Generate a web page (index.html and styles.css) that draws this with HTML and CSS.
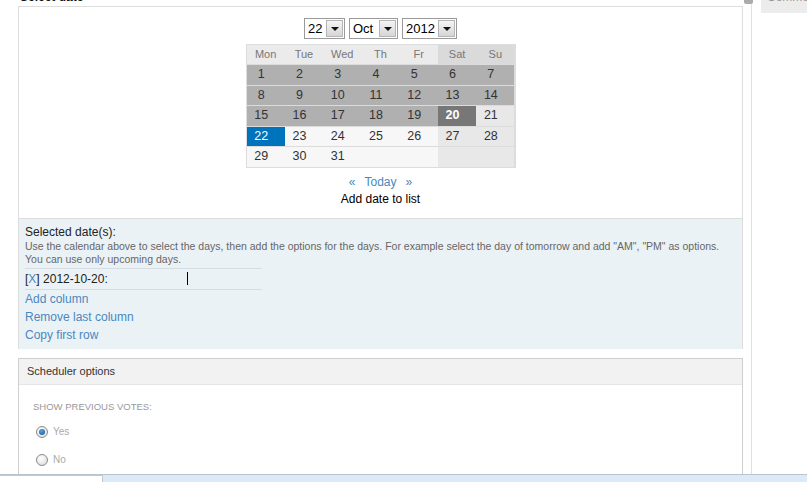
FILE: index.html
```html
<!DOCTYPE html>
<html lang="en">

<head>
    <meta charset="UTF-8">
    <title>Select date</title>
    <link rel="stylesheet" href="styles.css">
</head>

<body>
    <div class="page">
        <div class="main">
            <h3 class="title">Select date</h3>

            <!-- Kalender -->
            <div class="panel">
                <div class="pickers">
                    <div class="pick w-day"><span>22</span><i class="arrow"></i></div>
                    <div class="pick w-month"><span>Oct</span><i class="arrow"></i></div>
                    <div class="pick w-year"><span>2012</span><i class="arrow"></i></div>
                </div>

                <div class="cal">
                    <div class="hd">Mon</div><div class="hd">Tue</div><div class="hd">Wed</div><div class="hd">Th</div><div class="hd">Fr</div><div class="hd we">Sat</div><div class="hd we">Su</div>

                    <div class="d past">1</div><div class="d past">2</div><div class="d past">3</div><div class="d past">4</div><div class="d past">5</div><div class="d past">6</div><div class="d past">7</div>
                    <div class="d past">8</div><div class="d past">9</div><div class="d past">10</div><div class="d past">11</div><div class="d past">12</div><div class="d past">13</div><div class="d past">14</div>
                    <div class="d past">15</div><div class="d past">16</div><div class="d past">17</div><div class="d past">18</div><div class="d past">19</div><div class="d today">20</div><div class="d we">21</div>
                    <div class="d sel">22</div><div class="d">23</div><div class="d">24</div><div class="d">25</div><div class="d">26</div><div class="d we">27</div><div class="d we">28</div>
                    <div class="d">29</div><div class="d">30</div><div class="d">31</div><div class="d"></div><div class="d"></div><div class="d we"></div><div class="d we"></div>
                </div>

                <div class="cal-nav"><a href="#">&laquo;</a><a href="#">Today</a><a href="#">&raquo;</a></div>
                <div class="add-date">Add date to list</div>
            </div>

            <!-- Ausgewaehlte Tage -->
            <div class="selected">
                <div class="sel-title">Selected date(s):</div>
                <p class="help">Use the calendar above to select the days, then add the options for the days. For example select the day of tomorrow and add "AM", "PM" as options.<br>You can use only upcoming days.</p>
                <div class="date-row">[<a href="#">X</a>] 2012-10-20:<span class="caret"></span></div>
                <a class="act" href="#">Add column</a>
                <a class="act" href="#">Remove last column</a>
                <a class="act" href="#">Copy first row</a>
            </div>

            <!-- Optionen -->
            <div class="box">
                <div class="box-head">Scheduler options</div>
                <div class="box-body">
                    <div class="opt-label">Show previous votes:</div>
                    <label class="radio"><span class="dot checked"></span>Yes</label>
                    <label class="radio"><span class="dot"></span>No</label>
                </div>
            </div>
        </div>

        <div class="side">
            <div class="side-rail">
                <div class="plus"></div>
                <div class="rail-line"></div>
            </div>
            <div class="side-tab"><span>Comments</span></div>
        </div>
    </div>

    <div class="taskbar">
        <div class="task-tab"></div>
    </div>
</body>

</html>
```

FILE: styles.css
```css
* {
    margin: 0;
    padding: 0;
    box-sizing: border-box;
}

body {
    font-family: 'Liberation Sans', Arial, sans-serif;
    font-size: 12px;
    color: #222;
    background: #fff;
    height: 482px;
    overflow: hidden;
}

a {
    color: #4a88bd;
    text-decoration: none;
}

.page {
    display: flex;
    height: 482px;
}

.main {
    width: 743px;
    flex-shrink: 0;
    padding-left: 18px;
    margin-top: -10px;
}

.title {
    font-size: 12px;
    line-height: 14px;
    margin-bottom: 2px;
    margin-left: 2px;
    color: #111;
}

/* Kalender-Panel */
.panel {
    border: 1px solid #ddd;
    padding: 10px 0 11px;
    display: flex;
    flex-direction: column;
    align-items: center;
}

.pickers {
    display: flex;
    gap: 4px;
    margin-top: 1px;
    margin-bottom: 5px;
}

.pick {
    height: 21px;
    border: 1px solid #9a9a9a;
    display: flex;
    align-items: center;
    justify-content: space-between;
    padding: 1px 1px 1px 3px;
    font-size: 13px;
    color: #000;
    background: #fff;
}

.w-day { width: 41px; }
.w-month { width: 49px; }
.w-year { width: 55px; }

.arrow {
    width: 17px;
    height: 17px;
    border: 1px solid #b5b5b5;
    background: linear-gradient(#f4f4f4, #d6d6d6);
    position: relative;
}

.arrow::after {
    content: '';
    position: absolute;
    left: 4px;
    top: 6px;
    border-left: 4px solid transparent;
    border-right: 4px solid transparent;
    border-top: 4px solid #111;
}

.cal {
    width: 270px;
    border: 1px solid #ddd;
    display: grid;
    grid-template-columns: repeat(7, 1fr);
    grid-template-rows: 19px;
    grid-auto-rows: 19.5px;
    row-gap: 1px;
    background: #dcdcdc;
}

.cal .hd {
    background: #ebebeb;
    color: #777;
    font-size: 11px;
    line-height: 19px;
    text-align: center;
}

.cal .hd.we {
    background: #dadada;
}

.cal .d {
    background: #f7f7f7;
    color: #333;
    font-size: 12.5px;
    line-height: 19.5px;
    text-align: center;
    padding-right: 9px;
}

.cal .d.we {
    background: #e8e8e8;
}

.cal .d.past {
    background: #b0b0b0;
}

.cal .d.today {
    background: #777;
    color: #fff;
    font-weight: bold;
}

.cal .d.sel {
    background: #0073bd;
    color: #fff;
}

.cal-nav {
    display: flex;
    gap: 9px;
    margin-top: 5px;
    line-height: 18px;
}

.add-date {
    line-height: 16px;
    color: #000;
}

/* Ausgewaehlte Tage */
.selected {
    background: #ebf2f6;
    border-left: 1px solid #ddd;
    border-right: 1px solid #ddd;
    padding: 6px 6px 5px;
    display: flex;
    flex-direction: column;
}

.sel-title {
    line-height: 15px;
    color: #222;
}

.help {
    font-size: 10.5px;
    line-height: 13px;
    color: #666;
}

.date-row {
    width: 237px;
    margin-top: 2px;
    border-top: 1px solid #d6dde2;
    border-bottom: 1px solid #d6dde2;
    line-height: 20px;
    color: #222;
    display: flex;
    align-items: center;
}

.caret {
    width: 1px;
    height: 13px;
    background: #000;
    margin-left: 79px;
}

.act {
    line-height: 18px;
    align-self: flex-start;
}

/* Scheduler-Optionen */
.box {
    margin-top: 9px;
    border: 1px solid #cfcfcf;
    border-bottom: none;
    height: 140px;
}

.box-head {
    background: #f2f2f2;
    border-bottom: 1px solid #e6e6e6;
    height: 26px;
    line-height: 25px;
    padding-left: 8px;
    font-size: 11px;
    color: #333;
}

.box-body {
    padding: 15px 14px 0;
}

.opt-label {
    text-transform: uppercase;
    font-size: 9.5px;
    color: #999;
    line-height: 14px;
    margin-bottom: 10px;
}

.radio {
    display: flex;
    align-items: center;
    gap: 5px;
    height: 28px;
    padding-left: 3px;
    font-size: 10px;
    color: #aaa;
    margin-top: -6px;
    margin-bottom: 6px;
}

.dot {
    width: 12px;
    height: 12px;
    border-radius: 50%;
    border: 1px solid #8a8a8a;
    background: radial-gradient(circle at 40% 35%, #fff, #d8d8d8);
    display: flex;
    align-items: center;
    justify-content: center;
}

.dot.checked::after {
    content: '';
    width: 6px;
    height: 6px;
    border-radius: 50%;
    background: radial-gradient(circle at 40% 35%, #5aa2e0, #0b4f96);
}

/* Seitenleiste */
.side {
    flex: 1;
    min-width: 0;
    display: flex;
}

.side-rail {
    width: 18px;
    flex-shrink: 0;
    display: flex;
    flex-direction: column;
}

.plus {
    width: 9px;
    height: 4px;
    margin-left: 1px;
    background: #ababab;
    border-radius: 0 0 2px 2px;
}

.rail-line {
    flex: 1;
    margin-left: 8px;
    border-left: 1px solid #e0e0e0;
}

.side-tab {
    flex: 1;
    min-width: 0;
    height: 13px;
    background: #ececec;
    overflow: hidden;
    padding-left: 6px;
}

.side-tab span {
    display: block;
    margin-top: -10px;
    font-size: 12px;
    line-height: 14px;
    color: #999;
    white-space: nowrap;
}

/* Leiste unten */
.taskbar {
    position: fixed;
    left: 0;
    right: 0;
    bottom: 0;
    height: 8px;
    border-top: 1px solid #b8c4d0;
    background: #dce9f7;
}

.task-tab {
    width: 103px;
    height: 100%;
    background: #fff;
    border-right: 1px solid #c6c6c6;
    border-top: 1px solid #c6c6c6;
}
```
